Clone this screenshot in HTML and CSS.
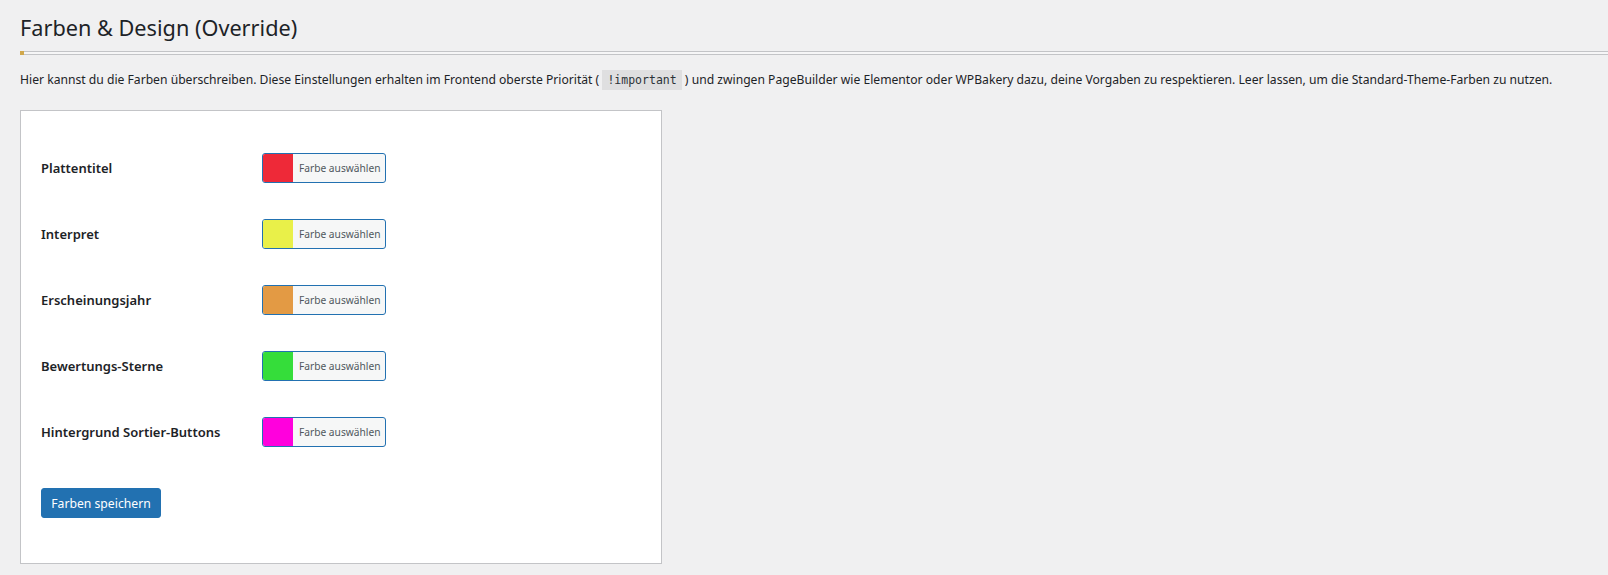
FILE: index.html
```html
<!DOCTYPE html>
<html lang="de">
<head>
<meta charset="utf-8">
<title>Farben &amp; Design</title>
<link rel="stylesheet" href="styles.css">
</head>
<body>
<div class="wrap">
  <h1 class="title">Farben &amp; Design (Override)</h1>
  <div class="rule"><span class="rule-dot"></span></div>
  <p class="desc">Hier kannst du die Farben überschreiben. Diese Einstellungen erhalten im Frontend oberste Priorität ( <code>!important</code> ) und zwingen PageBuilder wie Elementor oder WPBakery dazu, deine Vorgaben zu respektieren. Leer lassen, um die Standard-Theme-Farben zu nutzen.</p>
  <form class="card">
    <div class="row">
      <label class="label">Plattentitel</label>
      <button type="button" class="picker"><span class="swatch" style="background:#ee2938"></span><span class="picker-text">Farbe auswählen</span></button>
    </div>
    <div class="row">
      <label class="label">Interpret</label>
      <button type="button" class="picker"><span class="swatch" style="background:#e9f049"></span><span class="picker-text">Farbe auswählen</span></button>
    </div>
    <div class="row">
      <label class="label">Erscheinungsjahr</label>
      <button type="button" class="picker"><span class="swatch" style="background:#e39a44"></span><span class="picker-text">Farbe auswählen</span></button>
    </div>
    <div class="row">
      <label class="label">Bewertungs-Sterne</label>
      <button type="button" class="picker"><span class="swatch" style="background:#35dd3a"></span><span class="picker-text">Farbe auswählen</span></button>
    </div>
    <div class="row">
      <label class="label">Hintergrund Sortier-Buttons</label>
      <button type="button" class="picker"><span class="swatch" style="background:#ff00dd"></span><span class="picker-text">Farbe auswählen</span></button>
    </div>
    <div class="actions">
      <button type="button" class="save">Farben speichern</button>
    </div>
  </form>
</div>
</body>
</html>
```

FILE: styles.css
```css
html, body {
  margin: 0;
  padding: 0;
  background: #f0f0f1;
}
body {
  font-family: "Noto Sans", "Open Sans", sans-serif;
  color: #1d2327;
  font-size: 13px;
}
.wrap {
  padding: 0 0 0 20px;
}
.title {
  margin: 0;
  padding: 13px 0 0;
  font-size: 21.7px;
  font-weight: 400;
  line-height: 30px;
  color: #1d2327;
}
.rule {
  position: relative;
  margin-top: 8px;
  height: 2px;
  border-top: 1px solid #c3c4c7;
  border-bottom: 1px solid #c3c4c7;
  background: #f6f6f7;
}
.rule-dot {
  position: absolute;
  left: 0;
  top: -1px;
  width: 4px;
  height: 4px;
  background: #d1a84c;
}
.desc {
  margin: 14px 0 0;
  font-size: 12.15px;
  line-height: 22px;
  color: #1d2327;
  white-space: nowrap;
}
.desc code {
  font-family: "DejaVu Sans Mono", "Liberation Mono", monospace;
  font-size: 11.5px;
  background: rgba(0, 0, 0, 0.07);
  padding: 3px 5px 3px;
  color: #2c3338;
}
.card {
  margin-top: 19px;
  box-sizing: border-box;
  width: 642px;
  background: #fff;
  border: 1px solid #c3c4c7;
  padding: 42px 20px 45px;
  display: flex;
  flex-direction: column;
  gap: 36px;
}
.row {
  display: flex;
  align-items: center;
  height: 30px;
}
.label {
  width: 221px;
  flex: none;
  font-size: 13px;
  font-weight: 600;
  color: #1d2327;
}
.picker {
  display: flex;
  align-items: stretch;
  width: 124px;
  height: 30px;
  padding: 0;
  margin: 0;
  border: 1px solid #2271b1;
  border-radius: 3px;
  background: #f6f7f7;
  overflow: hidden;
  cursor: pointer;
  box-sizing: border-box;
}
.swatch {
  width: 30px;
  flex: none;
}
.picker-text {
  flex: 1;
  display: flex;
  align-items: center;
  padding-left: 6px;
  font-family: "Noto Sans", "Open Sans", sans-serif;
  font-size: 10.2px;
  color: #50575e;
  white-space: nowrap;
}
.actions {
  margin-top: 5px;
}
.save {
  width: 120px;
  height: 30px;
  border: 1px solid #2271b1;
  border-radius: 3px;
  background: #2271b1;
  color: #fff;
  font-family: "Noto Sans", "Open Sans", sans-serif;
  font-size: 12.2px;
  padding: 0;
  cursor: pointer;
}
```
